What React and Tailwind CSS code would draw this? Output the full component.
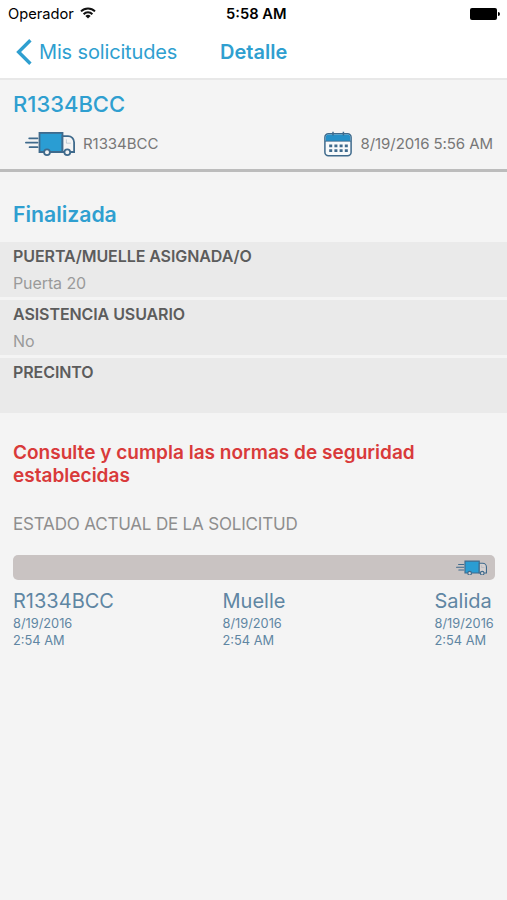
import React from 'react';

const details = [
    { label: 'PUERTA/MUELLE ASIGNADA/O', value: 'Puerta 20' },
    { label: 'ASISTENCIA USUARIO', value: 'No' },
    { label: 'PRECINTO', value: '' },
];

const TruckIcon = ({ className, cabFill = '#f4f4f4' }) => (
    <svg viewBox="0 0 50 25" className={className} fill="none" stroke="#3f6a8c" strokeWidth="1.8">
        <path d="M4.2 7.3h8.3M0.9 11.6h11.6M4.6 16.2h7.9" strokeLinecap="round" />
        <path d="M14.5 1.8H37.5v19.2H14.5z" fill="#2a9dd3" />
        <path d="M37.5 5.2h5.6a6 6 0 0 1 6 6V21H37.5z" fill={cabFill} />
        <path d="M41.4 8.4v3.8h4.4" strokeWidth="0.8" strokeOpacity="0.35" />
        <circle cx="22" cy="21.2" r="2.9" fill={cabFill} />
        <circle cx="42.3" cy="21.2" r="2.9" fill={cabFill} />
    </svg>
);

const CalendarIcon = () => (
    <svg viewBox="0 0 28 26" className="h-[26px] w-7" fill="none" stroke="#3f6a8c">
        <rect x="0.9" y="2.8" width="26.2" height="21.9" rx="3.5" fill="#f8fafb" strokeWidth="1.5" />
        <path d="M1.7 10V6.4a2.8 2.8 0 0 1 2.8-2.8h19a2.8 2.8 0 0 1 2.8 2.8V10z" fill="#2590c8" stroke="none" />
        <path d="M1 10.2h26" strokeWidth="0.9" />
        <path d="M9 0.8v3.6M19.4 0.8v3.6" strokeWidth="1.5" />
        <path d="M5.2 14.8h19M5.2 19.6h19" strokeWidth="2.8" strokeDasharray="3 2.2" />
    </svg>
);

const StatusBar = () => (
    <div className="flex h-7 items-center pr-[7px] pl-2 text-black">
        <div className="flex w-[218px] items-center gap-1.5">
            <span className="text-[14.7px]">Operador</span>
            <svg viewBox="0 0 16 12" className="mb-[2px] h-3 w-4" fill="none" stroke="#111" strokeWidth="2">
                <path d="M1 4.4a10 10 0 0 1 14 0M3.6 7.2a6.2 6.2 0 0 1 8.8 0" />
                <path d="M8 11.6L5.4 9a3.7 3.7 0 0 1 5.2 0z" fill="#111" stroke="none" />
            </svg>
        </div>
        <span className="text-[14.7px] font-semibold">5:58 AM</span>
        <div className="flex flex-1 items-center justify-end">
            <div className="mb-px h-3 w-[27px] rounded-[2px] bg-black"></div>
            <div className="mb-px ml-px h-1 w-[2px] rounded-r-full bg-black"></div>
        </div>
    </div>
);

const NavBar = () => (
    <div className="flex h-[52px] items-center border-b-2 border-[#e8e8e8] pb-0.5 pl-4 text-[20px] text-[#2f9fd0]">
        <svg viewBox="0 0 16 26" className="h-[26px] w-4" fill="none" stroke="currentColor" strokeWidth="3.4">
            <path d="M14.4 1.2L2.6 13l11.8 11.8" />
        </svg>
        <span className="ml-[7px] w-[181px] tracking-[-0.15px]">Mis solicitudes</span>
        <h1 className="font-semibold">Detalle</h1>
    </div>
);

const Step = ({ name, className }) => (
    <div className={`text-[12.8px] leading-[17px] text-[#5f86a3] ${className}`}>
        <div className="mb-0.5 text-[20px] leading-6">{name}</div>
        <div>8/19/2016</div>
        <div>2:54 AM</div>
    </div>
);

const App = () => {
    return (
        <div className="h-[900px] w-[507px] overflow-hidden bg-[#f4f4f4] font-['Inter',sans-serif]">
            <header className="bg-white">
                <StatusBar />
                <NavBar />
            </header>

            <section className="h-[92px] border-b-[3px] border-[#bcbcbc] pt-2.5 pr-[14px] pl-[13px]">
                <h2 className="text-[22px] leading-7 font-medium text-[#2f9fd0]">R1334BCC</h2>
                <div className="mt-[13px] flex h-[26px] items-center text-[15px] text-[#777]">
                    <TruckIcon className="mb-px ml-3 h-[25px] w-[50px]" />
                    <span className="ml-2 flex-1 tracking-[-0.05px]">R1334BCC</span>
                    <CalendarIcon />
                    <span className="ml-2 tracking-[-0.07px]">8/19/2016 5:56 AM</span>
                </div>
            </section>

            <h2 className="mt-7 ml-[13px] text-[21.2px] leading-7 font-semibold text-[#2f9fd0]">Finalizada</h2>

            <dl className="mt-[14px] flex flex-col gap-[3px]">
                {details.map((item) => (
                    <div key={item.label} className="h-[55px] bg-[#eaeaea] pt-1 pl-[13px]">
                        <dt className="text-[16px] leading-5 font-semibold tracking-[-0.08px] text-[#5c5c5c]">{item.label}</dt>
                        <dd className="mt-[7px] text-[16px] leading-5 tracking-[-0.1px] text-[#9a9a9a]">{item.value}</dd>
                    </div>
                ))}
            </dl>

            <p className="mt-7 ml-[13px] w-[430px] text-[19.05px] leading-[23px] font-semibold text-[#d93a3a]">
                Consulte y cumpla las normas de seguridad establecidas
            </p>

            <h3 className="mt-[25px] ml-[13px] text-[17px] leading-6 tracking-[-0.18px] text-[#8e8e8e]">ESTADO ACTUAL DE LA SOLICITUD</h3>

            <div className="mt-[19px] mr-[12px] ml-[13px] flex h-[25px] items-center justify-end rounded-[5px] bg-[#c9c3c2] pr-2">
                <TruckIcon className="h-[15.5px] w-[31px]" cabFill="#d6d1d0" />
            </div>

            <div className="mt-[9px] ml-[13px] flex">
                <Step name="R1334BCC" className="w-[209.5px]" />
                <Step name="Muelle" className="w-[212px]" />
                <Step name="Salida" />
            </div>
        </div>
    );
};

export default App;
